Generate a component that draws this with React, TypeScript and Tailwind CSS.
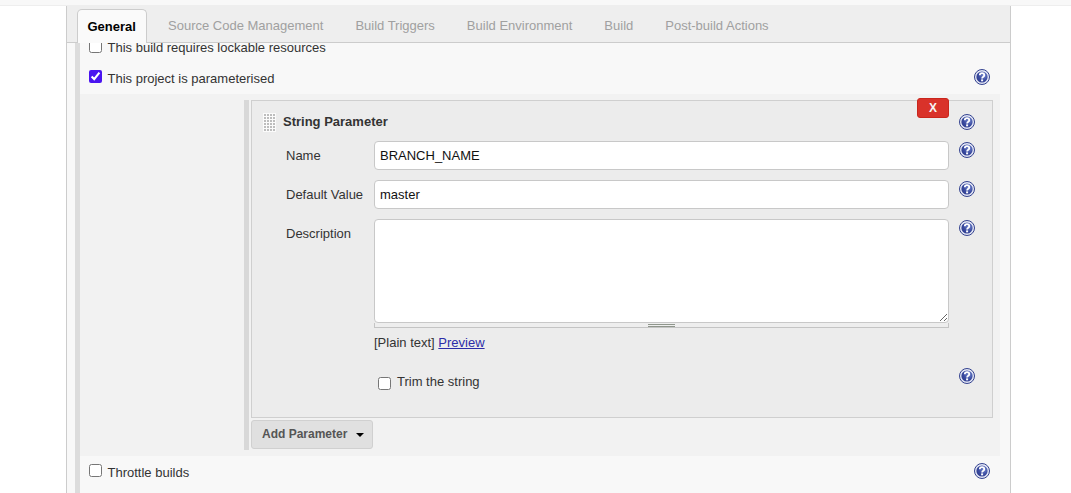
import { useId } from "react";

const tabs = [
  "Source Code Management",
  "Build Triggers",
  "Build Environment",
  "Build",
  "Post-build Actions",
];

function HelpIcon() {
  const id = useId();
  return (
    <svg width="16" height="16" viewBox="0 0 16 16" className="block shrink-0">
      <defs>
        <radialGradient id={id} cx="0.65" cy="0.35" r="0.8">
          <stop offset="0" stopColor="#7387cf" />
          <stop offset="0.55" stopColor="#3a4ba0" />
          <stop offset="1" stopColor="#2c398a" />
        </radialGradient>
      </defs>
      <circle cx="8" cy="8" r="7.5" fill="#e4e7f5" stroke="#33428f" strokeWidth="1" />
      <circle cx="8" cy="8" r="5.6" fill={`url(#${id})`} />
      <path
        d="M5.8 6.3C5.8 4.9 6.9 4.2 8 4.2C9.3 4.2 10.3 5 10.3 6.2C10.3 7.7 8.1 7.7 8.1 9.4"
        fill="none"
        stroke="#fff"
        strokeWidth="1.8"
      />
      <rect x="7.1" y="10.4" width="2" height="1.9" fill="#fff" />
    </svg>
  );
}

function DragHandle() {
  const dots = [];
  for (let r = 0; r < 6; r++) {
    for (let c = 0; c < 4; c++) {
      dots.push(<rect key={`${r}-${c}`} x={1 + c * 3} y={1 + r * 3} width="2" height="2" fill="#bdbdbd" />);
    }
  }
  return (
    <svg width="13" height="19" viewBox="0 0 13 19" className="block shrink-0">
      <rect width="13" height="19" fill="#fbfbfb" />
      {dots}
    </svg>
  );
}

function FieldRow({ label, value }: { label: string; value: string }) {
  return (
    <div className="flex items-start mb-[10px]">
      <label className="w-[88px] pt-[7px] leading-[15px] text-[#333]">{label}</label>
      <input
        readOnly
        value={value}
        className="w-[575px] h-[29px] px-[5px] bg-white border border-[#c8c8c8] rounded-[4px] text-[13px] text-[#111] outline-none"
      />
      <div className="ml-[10px] pt-[1px]">
        <HelpIcon />
      </div>
    </div>
  );
}

export default function App() {
  return (
    <div className="h-[493px] overflow-hidden bg-white text-[13px] text-[#333] font-['Liberation_Sans',Arial,sans-serif]">
      <div className="h-[6px] bg-[#f8f8f8] border-b border-[#eeeeee]" />
      <div className="ml-[66px] w-[945px] h-[487px] bg-[#f8f8f8] border-x border-[#cccccc] overflow-hidden">
        {/* tab bar */}
        <div className="relative z-10 h-[37px] pt-[3px] pl-[10px] flex items-end bg-[#eeeeee] border-b border-[#cccccc]">
          <div className="h-[34px] -mb-px px-[9.5px] w-[70px] flex items-center bg-[#fafafa] border border-b-0 border-[#cccccc] rounded-t-[5px] font-bold text-black">
            General
          </div>
          <div className="h-[34px] pt-[2px] ml-[21px] flex items-center gap-[32px] text-[#a0a0a0]">
            {tabs.map((t) => (
              <span key={t}>{t}</span>
            ))}
          </div>
        </div>

        <div className="ml-[8px] mr-[10px] border-l-[5px] border-[#dcdcdc]">
          <div className="-mt-[3px] h-[21px] pl-[9px] flex items-start gap-[5.5px]">
            <input type="checkbox" readOnly className="mt-0 w-[13px] h-[13px]" />
            <span className="leading-[15px]">This build requires lockable resources</span>
          </div>
          <div className="h-[33px] pl-[9px] pr-[10px] flex items-start">
            <input type="checkbox" checked readOnly className="mt-[9px] w-[13px] h-[13px] accent-[#4a14f0]" />
            <span className="ml-[5.5px] mt-[10px] leading-[15px]">This project is parameterised</span>
            <div className="ml-auto mt-[8px]">
              <HelpIcon />
            </div>
          </div>

          {/* parameters block */}
          <div className="h-[362px] pt-[6px] pl-[164px] bg-[#f2f2f2]">
            <div className="h-[350px] border-l-[5px] border-[#d8d8d8] pl-[2px]">
              <div className="relative w-[742px] h-[318px] bg-[#ececec] border border-[#cfcfcf]">
                <div className="absolute -top-[3px] right-[43px] w-[32px] h-[20px] flex items-center justify-center bg-[#d9322a] border border-[#c9261c] rounded-[3px] font-bold text-[12px] text-[#f5f5f5]">
                  X
                </div>

                <div className="h-[40px] pl-[11px] flex items-start">
                  <div className="mt-[12px]">
                    <DragHandle />
                  </div>
                  <span className="ml-[7px] mt-[13px] leading-[15px] font-bold">String Parameter</span>
                  <div className="ml-[571px] mt-[13px]">
                    <HelpIcon />
                  </div>
                </div>

                <div className="pl-[34px]">
                  <FieldRow label="Name" value="BRANCH_NAME" />
                  <FieldRow label="Default Value" value="master" />

                  <div className="flex items-start">
                    <label className="w-[88px] pt-[7px] leading-[15px]">Description</label>
                    <div className="w-[575px]">
                      <textarea
                        readOnly
                        className="block w-[575px] h-[104px] bg-white border border-[#c8c8c8] rounded-[4px] outline-none resize-y"
                      />
                      <div className="h-[5px] flex justify-center bg-[#eeeeee] border-x border-b border-[#c4c4c4]">
                        <div className="w-[27px] h-[3px] mt-px border-y border-[#8f968c]" />
                      </div>
                      <div className="mt-[7px] leading-[15px]">
                        [Plain text]{" "}
                        <a href="#" className="text-[#2c2ca8] underline">
                          Preview
                        </a>
                      </div>
                    </div>
                    <div className="ml-[10px] pt-px">
                      <HelpIcon />
                    </div>
                  </div>

                  <div className="mt-[18px] flex items-start">
                    <input type="checkbox" readOnly className="ml-[92px] mt-[9px] w-[13px] h-[13px]" />
                    <span className="ml-[6px] mt-[6px] leading-[15px]">Trim the string</span>
                    <div className="ml-[479px]">
                      <HelpIcon />
                    </div>
                  </div>
                </div>
              </div>

              <button className="mt-[2px] w-[122px] h-[29px] pl-[10px] pb-[2px] flex items-center bg-[#e0e0e0] border border-[#d0d0d0] rounded-[3px] font-bold text-[12px] text-[#555]">
                Add Parameter
                <span className="ml-[8.5px] mt-[3px] w-0 h-0 border-x-[4px] border-x-transparent border-t-[4px] border-t-black" />
              </button>
            </div>
          </div>

          <div className="h-[40px] pl-[9px] pr-[10px] flex items-start">
            <input type="checkbox" readOnly className="mt-[8px] w-[13px] h-[13px]" />
            <span className="ml-[5.5px] mt-[9px] leading-[15px]">Throttle builds</span>
            <div className="ml-auto mt-[7px]">
              <HelpIcon />
            </div>
          </div>
        </div>
      </div>
    </div>
  );
}
